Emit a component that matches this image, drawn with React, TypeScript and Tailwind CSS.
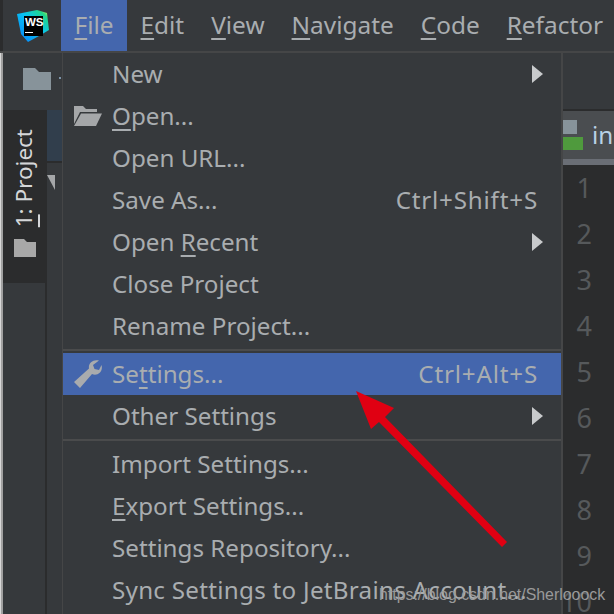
const menuBar = [
  { key: "F", rest: "ile", active: true },
  { key: "E", rest: "dit" },
  { key: "V", rest: "iew" },
  { key: "N", rest: "avigate" },
  { key: "C", rest: "ode" },
  { key: "R", rest: "efactor" },
];

type Row = {
  before?: string;
  mark?: string;
  after?: string;
  shortcut?: string;
  arrow?: boolean;
  icon?: "open" | "wrench";
  active?: boolean;
  wide?: boolean;
};

const groupA: Row[] = [
  { before: "New", arrow: true },
  { mark: "O", after: "pen...", icon: "open" },
  { before: "Open URL..." },
  { before: "Save As...", shortcut: "Ctrl+Shift+S" },
  { before: "Open ", mark: "R", after: "ecent", arrow: true },
  { before: "Close Project" },
  { before: "Rename Project..." },
];
const groupB: Row[] = [
  { before: "Se", mark: "t", after: "tings...", shortcut: "Ctrl+Alt+S", icon: "wrench", active: true },
  { before: "Other Settings", arrow: true },
];
const groupC: Row[] = [
  { before: "Import Settings..." },
  { mark: "E", after: "xport Settings..." },
  { before: "Settings Repository..." },
  { before: "Sync Settings to JetBrains Account...", wide: true },
];

const FolderOpen = () => (
  <svg width="28" height="20" viewBox="0 0 28 20" className="fill-[#a5a7a9]">
    <path d="M0 0h9l3 3h11v3H6L0 18z" />
    <path d="M7 7.500h21L22 20H0z" />
  </svg>
);

const WrenchIcon = () => (
  <svg width="28" height="28" viewBox="0 0 28 28" className="fill-[#a9abad]">
    <path d="M0 22L15 8.500C14 3 19-1 25 .5L19 5l1.500 4L25 10l2.500-5C29.500 12 23 16.500 18 14L6 28z" />
  </svg>
);

const WsLogo = () => (
  <div className="relative h-[32px] w-[32px]">
    <svg width="32" height="32" viewBox="0 0 32 32">
      <defs>
        <linearGradient id="ws" x1="0" y1="1" x2="1" y2="0">
          <stop offset="0" stopColor="#087cfa" />
          <stop offset="0.55" stopColor="#07c3f2" />
          <stop offset="0.85" stopColor="#21d789" />
          <stop offset="1" stopColor="#fcf84a" />
        </linearGradient>
      </defs>
      <path d="M0 4L20 0l10 3 2 17-10 6-11 6-7-8z" fill="url(#ws)" />
      <rect x="7" y="6" width="19" height="20" fill="#000" />
      <rect x="8" y="22" width="8" height="1" fill="#fff" />
    </svg>
    <span className="absolute top-[6px] left-[8px] font-['Liberation_Sans',sans-serif] text-[11.5px] leading-[13px] font-bold text-white">
      WS
    </span>
  </div>
);

const MenuRow = ({ row }: { row: Row }) => (
  <div className={`flex h-[42px] shrink-0 items-center pr-[23px] ${row.active ? "bg-[#4466ad]" : ""}`}>
    <div className="flex w-[49px] shrink-0 justify-center">
      {row.icon === "open" && <FolderOpen />}
      {row.icon === "wrench" && <WrenchIcon />}
    </div>
    <span className={`whitespace-nowrap ${row.wide ? "tracking-[0.27px]" : ""}`}>
      {row.before}
      {row.mark && <span className="underline decoration-2 underline-offset-[4px]">{row.mark}</span>}
      {row.after}
    </span>
    {row.shortcut && <span className="ml-auto tracking-[0.8px] whitespace-nowrap">{row.shortcut}</span>}
    {row.arrow && (
      <svg width="11" height="18" viewBox="0 0 11 18" className="-mr-[5px] ml-auto fill-[#c8cacc]">
        <path d="M0 0l11 9-11 9z" />
      </svg>
    )}
  </div>
);

const Separator = () => (
  <div className="flex h-[6px] shrink-0 items-center">
    <div className="h-[2px] w-full bg-[#4a4b4c]" />
  </div>
);

export default function App() {
  const lines = [1, 2, 3, 4, 5, 6, 7, 8, 9, 10];

  return (
    <div className="relative flex h-[614px] w-[614px] flex-col overflow-hidden bg-[#36393c] font-['Noto_Sans',sans-serif] text-[24.2px] text-[#a9adb0]">
      {/* menu bar */}
      <div className="flex h-[53px] shrink-0 border-b-2 border-[#454647] bg-[#36393c] text-[24.4px]">
        <div className="w-[3px] shrink-0 bg-[#2b2c2d]" />
        <div className="flex w-[58px] shrink-0 items-center pl-[14px]">
          <WsLogo />
        </div>
        {menuBar.map((m) => (
          <div
            key={m.key}
            className={`flex h-[51px] items-center px-[13.5px] ${m.active ? "bg-[#4466ad]" : ""}`}
          >
            <span>
              <span className="underline decoration-2 underline-offset-[4px]">{m.key}</span>
              {m.rest}
            </span>
          </div>
        ))}
      </div>

      <div className="flex min-h-0 flex-1">
        {/* window edge */}
        <div className="w-[3px] shrink-0 border-l border-[#d8d8d8] bg-[#a0a0a0]" />

        {/* left tool windows */}
        <div className="flex w-[59px] shrink-0 flex-col">
          <div className="relative flex h-[57px] shrink-0 items-center pb-[6px] pl-[20px]">
            <svg width="28" height="22" viewBox="0 0 28 22" className="fill-[#87939a]">
              <path d="M0 0h12l4 4h12v18H0z" />
            </svg>
            <div className="absolute top-[24px] right-[1px] h-[2px] w-[2px] bg-[#7d93a8]" />
          </div>
          <div className="flex min-h-0 flex-1">
            <div className="flex w-[42px] shrink-0 flex-col">
              <div className="flex h-[173px] shrink-0 flex-col items-center justify-end gap-[12px] bg-[#2b2c2d] pb-[26px] text-[#d5d7d9]">
                <span className="rotate-180 text-[22.5px] leading-none whitespace-nowrap [writing-mode:vertical-rl]">
                  <span className="underline decoration-2 underline-offset-[3px]">1</span>: Project
                </span>
                <svg width="22" height="18" viewBox="0 0 22 18" className="ml-[2px] fill-[#a8a8a8]">
                  <path d="M0 0h10l3 3h9v15H0z" />
                </svg>
              </div>
            </div>
            <div className="flex flex-1 flex-col border-l-[2px] border-[#2b2c2d]">
              <div className="h-[53px] shrink-0 border-b-2 border-[#2b2c2d] bg-[#313e4c]" />
              <svg width="15" height="16" viewBox="0 0 15 16" className="mt-[12px] fill-[#a5a7a9]">
                <path d="M0 0h8v15z" />
              </svg>
            </div>
          </div>
        </div>

        {/* File menu */}
        <div className="flex w-[501px] shrink-0 flex-col overflow-hidden border-r-2 border-l border-[#454647] bg-[#36393c]">
          {groupA.map((row, i) => <MenuRow key={i} row={row} />)}
          <Separator />
          {groupB.map((row, i) => <MenuRow key={i} row={row} />)}
          <Separator />
          {groupC.map((row, i) => <MenuRow key={i} row={row} />)}
        </div>

        {/* editor */}
        <div className="flex min-w-0 flex-1 flex-col">
          <div className="h-[58px] shrink-0 border-b-2 border-[#2b2c2d]" />
          <div className="flex h-[54px] shrink-0 items-center gap-[9px] overflow-hidden border-b-[6px] border-[#6a6e75] bg-[#4a4d50] text-[#b9d2e6]">
            <div className="relative h-[30px] w-[20px] shrink-0">
              <div className="absolute top-0 right-[6px] h-[14px] w-[14px] bg-[#87939a]" />
              <div className="absolute top-[17px] left-0 h-[13px] w-[20px] bg-[#4f9a3d]" />
            </div>
            <span>index</span>
          </div>
          <div className="flex flex-1 flex-col items-end bg-[#2b2c2d] pr-[22px] text-[27px] text-[#56595b]">
            {lines.map((n) => (
              <div key={n} className="flex h-[46px] shrink-0 items-center">
                {n}
              </div>
            ))}
          </div>
        </div>
      </div>

      {/* red annotation arrow */}
      <svg
        width="160"
        height="170"
        viewBox="0 0 160 170"
        className="pointer-events-none absolute top-[390px] left-[350px]"
      >
        <path d="M6 1l38 17-9 9 122 125-5 5L29 32l-8 7z" className="fill-[#e00012]" />
      </svg>

      {/* blog watermark */}
      <div className="absolute top-[587px] left-[379px] font-['Liberation_Sans',sans-serif] text-[15.9px] leading-none whitespace-nowrap text-[#9a9a9a]">
        https://blog.csdn.net/Sherlooock
      </div>
    </div>
  );
}
